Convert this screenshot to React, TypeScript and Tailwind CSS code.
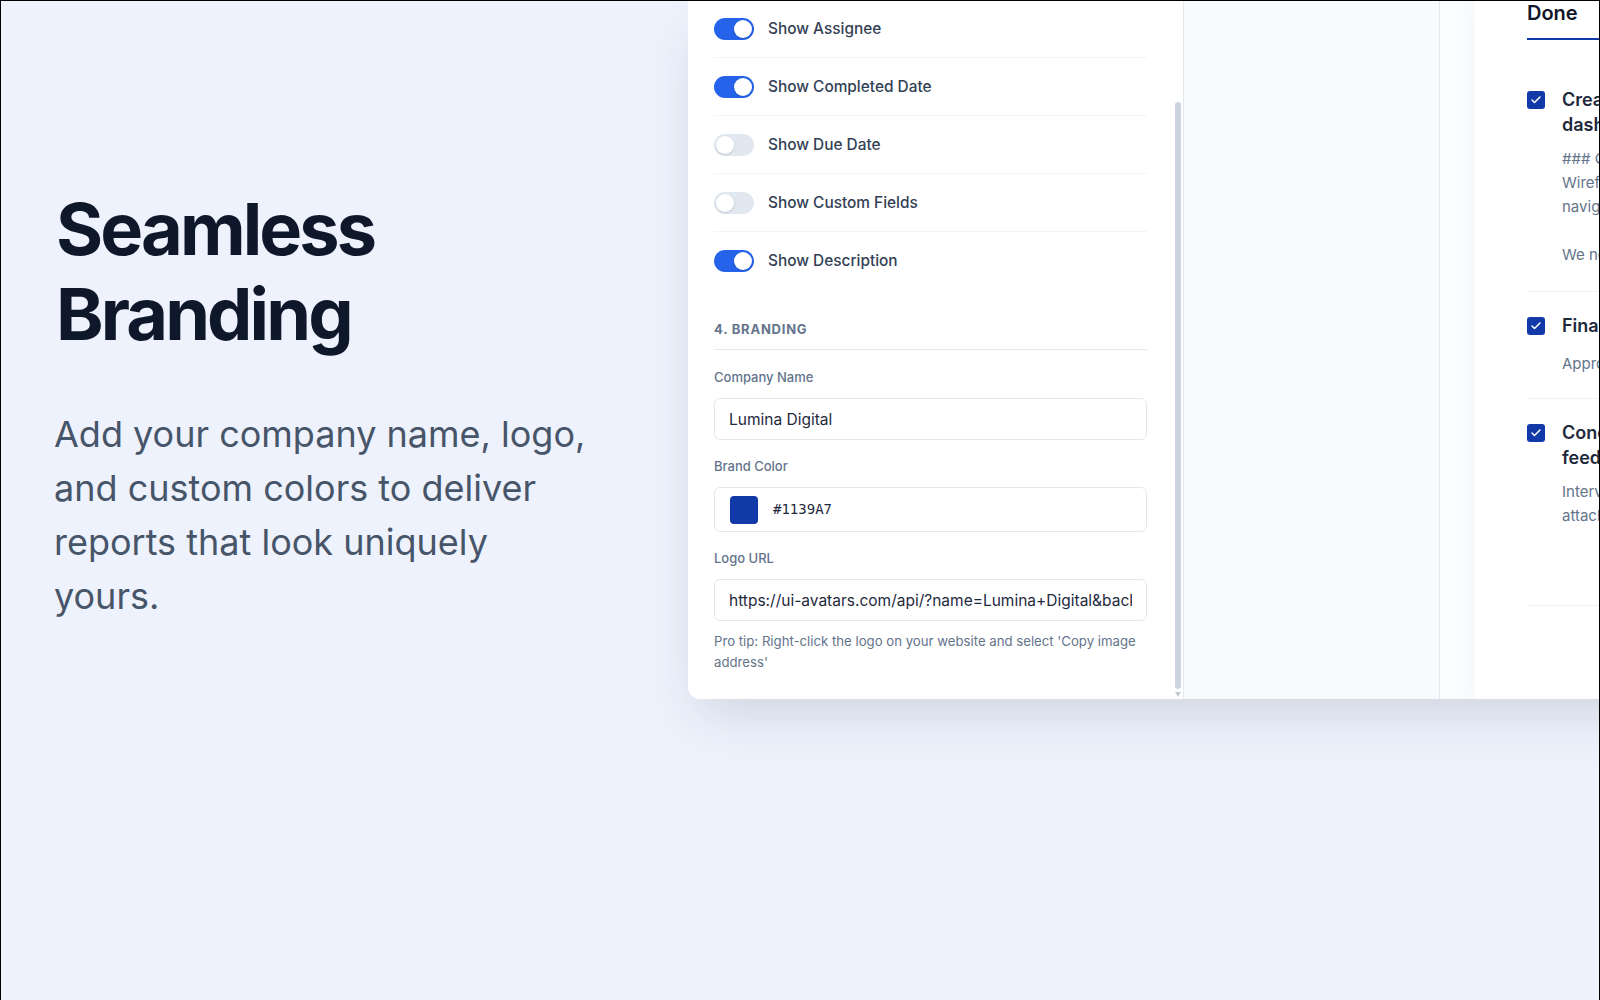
import { Check } from "lucide-react"

const toggles = [
  { label: "Show Assignee", on: true },
  { label: "Show Completed Date", on: true },
  { label: "Show Due Date", on: false },
  { label: "Show Custom Fields", on: false },
  { label: "Show Description", on: true },
]

const doneTasks = [
  {
    title: "Create wireframes for analytics\ndashboard",
    body: "### Overview\nWireframes for the main dashboard layout and widgets\nnavigation flow between the report views.\n\nWe need sign-off before development starts.",
    bodyGap: "mt-[10px]",
    bottom: "pb-6",
  },
  {
    title: "Finalize brand color palette",
    body: "Approved by the design team on Friday.",
    bodyGap: "mt-[14px]",
    bottom: "pb-[22px]",
  },
  {
    title: "Conduct user interviews for\nfeedback",
    body: "Interviewed 8 customers, notes and recordings\nattached in the shared drive.",
    bodyGap: "mt-[10px]",
    bottom: "pb-[77px]",
  },
]

function Toggle({ on }: { on: boolean }) {
  return (
    <span
      className={`flex h-[22px] w-10 shrink-0 items-center rounded-full p-[2px] ${on ? "justify-end bg-[#2563eb]" : "justify-start bg-[#e2e8f0]"}`}
    >
      <span className="h-[18px] w-[18px] rounded-full bg-white shadow-sm" />
    </span>
  )
}

function SettingsPane() {
  return (
    <div className="flex w-[496px] shrink-0 border-r border-[#e2e8f0]">
      <div className="flex-1 pl-[26px] pr-[24px]">
        <div>
          {toggles.map((t, i) => (
            <div
              className={`flex items-center gap-[14px] ${i === 0 ? "h-[57px]" : "h-[58px]"} ${i < toggles.length - 1 ? "border-b border-[#f1f5f9]" : ""}`}
              key={t.label}
            >
              <Toggle on={t.on} />
              <span className="text-[15.4px] font-medium text-[#334155]">
                {t.label}
              </span>
            </div>
          ))}
        </div>

        <div className="mt-[29px] border-b border-[#e2e8f0] pb-[10px] text-[13px] font-bold leading-5 tracking-[0.06em] text-[#64748b]">
          4. BRANDING
        </div>

        <div className="mt-[17px] flex flex-col gap-4">
          <label className="block">
            <span className="mb-[11px] block text-[13px] font-medium leading-5 text-[#64748b]">
              Company Name
            </span>
            <input
              className="h-[42px] w-full rounded-md border border-[#e2e8f0] bg-white px-[14px] text-[15.5px] text-[#1e293b] outline-none"
              readOnly
              value="Lumina Digital"
            />
          </label>

          <div>
            <span className="mb-[11px] block text-[13px] font-medium leading-5 text-[#64748b]">
              Brand Color
            </span>
            <div className="flex h-[45px] items-center gap-[15px] rounded-md border border-[#e2e8f0] bg-white px-[15px]">
              <span className="h-7 w-7 rounded-[4px] bg-[#1139A7]" />
              <span className="font-['DejaVu_Sans_Mono',monospace] text-[14px] text-[#1e293b]">
                #1139A7
              </span>
            </div>
          </div>

          <label className="block">
            <span className="mb-[11px] block text-[13px] font-medium leading-5 text-[#64748b]">
              Logo URL
            </span>
            <input
              className="h-[42px] w-full rounded-md border border-[#e2e8f0] bg-white px-[14px] text-[15.5px] text-[#1e293b] outline-none"
              readOnly
              value="https://ui-avatars.com/api/?name=Lumina+Digital&background=1139A7&color=fff"
            />
            <span className="mt-[10px] block text-[13.2px] leading-[21px] text-[#64748b]">
              Pro tip: Right-click the logo on your website and select 'Copy
              image address'
            </span>
          </label>
        </div>
      </div>

      {/* fake scrollbar, scrolled to the bottom */}
      <div className="flex w-3 shrink-0 flex-col items-start pl-1 pt-[101px] pb-[2px]">
        <div className="w-[6px] flex-1 rounded-full bg-[#cdd3e0]" />
        <svg className="mt-[3px] h-[5px] w-[6px]" viewBox="0 0 6 5">
          <path d="M0 0h6L3 5z" fill="#c3c9d4" />
        </svg>
      </div>
    </div>
  )
}

function PreviewPage() {
  return (
    <div className="flex flex-1 bg-[#fcfdfe] pl-[35px]">
      <div className="w-[720px] shrink-0 bg-white pl-[52px] pr-12 shadow-[-6px_0_20px_rgba(15,23,42,0.03)]">
        <h3 className="-mt-[2px] border-b-2 border-[#1139A7] pb-[11px] text-xl font-semibold leading-7 text-[#0f172a]">
          Done
        </h3>
        <div className="mt-[26px]">
          {doneTasks.map((task) => (
            <div
              className={`flex gap-[17px] border-b border-[#eef1f5] pt-[21px] ${task.bottom}`}
              key={task.title}
            >
              <span className="mt-1 flex h-[18px] w-[18px] shrink-0 items-center justify-center rounded-[3px] bg-[#1139A7]">
                <Check className="h-3 w-3 text-white" strokeWidth={3} />
              </span>
              <div>
                <div className="whitespace-pre-line text-[18px] font-semibold leading-[25px] text-[#1e293b]">
                  {task.title}
                </div>
                <p
                  className={`${task.bodyGap} whitespace-pre-line text-[15px] leading-6 text-[#64748b]`}
                >
                  {task.body}
                </p>
              </div>
            </div>
          ))}
        </div>
      </div>
    </div>
  )
}

export default function App() {
  return (
    <div className="flex h-[1000px] w-full overflow-hidden border-x border-t border-black bg-[#eef2fd] font-['Inter',sans-serif]">
      <div className="w-[687px] shrink-0 pl-[53px] pt-[185px]">
        <h1 className="ml-[2px] max-w-[560px] text-[72px] font-bold leading-[85px] tracking-[-0.04em] text-[#0f172a]">
          Seamless Branding
        </h1>
        <p className="mt-[51px] max-w-[548px] text-[36px] leading-[54px] text-[#475569]">
          Add your company name, logo, and custom colors to deliver reports
          that look uniquely yours.
        </p>
      </div>

      <div className="flex h-[698px] w-[1200px] shrink-0 overflow-hidden rounded-b-xl bg-white shadow-[0_24px_50px_-12px_rgba(30,41,59,0.16)]">
        <SettingsPane />
        <div className="w-[256px] shrink-0 border-r border-[#e2e8f0] bg-[#f8fafc]" />
        <PreviewPage />
      </div>
    </div>
  )
}
